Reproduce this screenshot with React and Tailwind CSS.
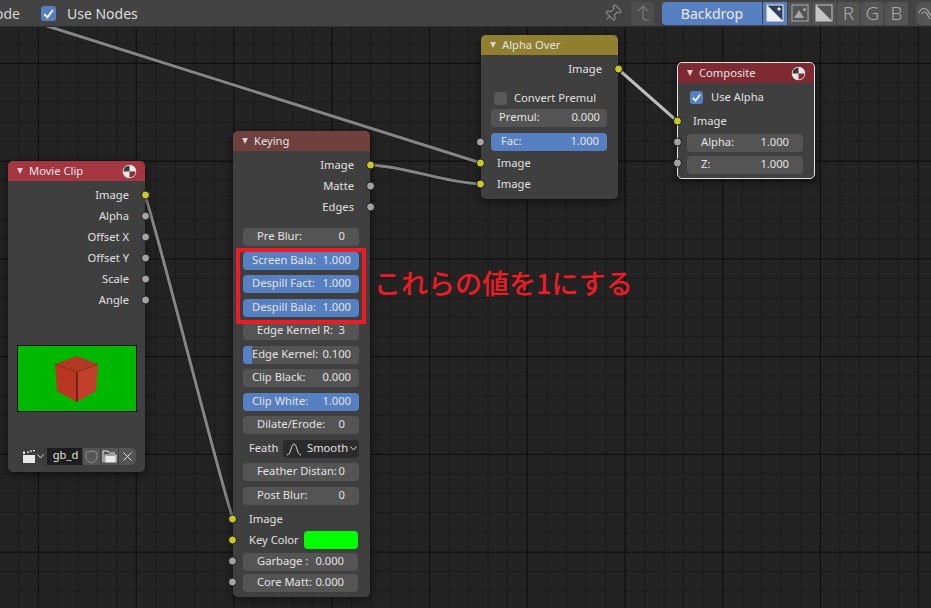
import React from "react";
import { Pin } from "lucide-react";

const font = { fontFamily: '"Noto Sans", sans-serif' };

function Socket({ y, yellow, left }) {
  return (
    <span
      className={`absolute w-[9px] h-[9px] rounded-full border border-[#1c1c1c] -translate-y-1/2 ${left ? "left-[-5px]" : "right-[-5px]"} ${yellow ? "bg-[#c9c82a]" : "bg-[#a3a3a3]"}`}
      style={{ top: y }}
    />
  );
}

function PieIcon() {
  return (
    <svg width="15" height="15" viewBox="0 0 16 16" className="shrink-0">
      <circle cx="8" cy="8" r="7.2" fill="#e8e8e8" />
      <path d="M8 8V1.6A6.4 6.4 0 0 0 1.6 8Z" fill="#3a3a3a" />
      <path d="M8 8V14.4A6.4 6.4 0 0 0 14.4 8Z" fill="#8a2a32" />
    </svg>
  );
}

function Header({ title, color, pie }) {
  return (
    <div className={`flex items-center h-[20px] pl-[9px] pr-[8px] rounded-t-[5px] ${color}`}>
      <span className="w-0 h-0 border-l-[3.5px] border-r-[3.5px] border-t-[6px] border-l-transparent border-r-transparent border-t-[#d4d4d4] mr-[6px]" />
      <span className="text-[#e2e2e2] text-[11.2px] flex-1">{title}</span>
      {pie && <PieIcon />}
    </div>
  );
}

function Out({ label }) {
  return <div className="h-[21px] flex items-center justify-end pr-[16px] text-[#e0e0e0] text-[11.2px]">{label}</div>;
}

function In({ label, cls = "pl-[16px]" }) {
  return <div className={`h-[21px] flex items-center text-[#e0e0e0] text-[11.2px] ${cls}`}>{label}</div>;
}

function Field({ label, value, blue, fill, cls = "pl-[14px] pr-[14px]", w = "w-[116px]" }) {
  return (
    <div className={`relative h-[18px] ${w} pb-[1px] rounded-[4px] overflow-hidden flex items-center justify-between text-[11.2px] text-[#e2e2e2] ${cls} ${blue ? "bg-[#5680c2]" : "bg-[#545454]"}`}>
      {fill && <span className="absolute left-0 top-0 bottom-0 w-[9px] bg-[#5680c2]" />}
      <span className="relative whitespace-nowrap">{label}</span>
      <span className="relative whitespace-nowrap">{value}</span>
    </div>
  );
}

function Check({ on }) {
  return (
    <span className={`w-[13px] h-[13px] rounded-[3px] flex items-center justify-center shrink-0 ${on ? "bg-[#5680c2]" : "bg-[#585858]"}`}>
      {on && (
        <svg width="11" height="11" viewBox="0 0 12 12">
          <path d="M2 6.5 5 9.5 10 2.8" stroke="#fff" strokeWidth="1.8" fill="none" />
        </svg>
      )}
    </span>
  );
}

function Links() {
  const Link = ({ d, light }) => (
    <>
      <path d={d} stroke="#141414" strokeWidth="4.5" fill="none" opacity="0.6" />
      <path d={d} stroke={light ? "#bdbdbd" : "#858585"} strokeWidth="3" fill="none" />
    </>
  );
  return (
    <svg className="absolute inset-0" width="931" height="608">
      <Link d="M28 20 L481 163" />
      <Link d="M370 165 C 410 167, 440 182, 481 184" />
      <Link d="M618 69 L677 121" light />
      <Link d="M145 195 C 160 240, 218 475, 233 519" />
    </svg>
  );
}

function MovieClip() {
  return (
    <div className="absolute left-[8px] top-[161px] w-[137px] h-[311px] rounded-[5px] bg-[#3f3f3f] shadow-[0_2px_10px_rgba(0,0,0,0.55)]">
      <Header title="Movie Clip" color="bg-[#a33641]" pie />
      <Socket y={34} yellow />
      <Socket y={55} />
      <Socket y={76} />
      <Socket y={97} />
      <Socket y={118} />
      <Socket y={139} />
      <div className="pt-[3.5px]">
        <Out label="Image" />
        <Out label="Alpha" />
        <Out label="Offset X" />
        <Out label="Offset Y" />
        <Out label="Scale" />
        <Out label="Angle" />
      </div>
      <div className="ml-[9px] mt-[34px] w-[120px] h-[67px] bg-[#00b800] border border-[#0c0c0c] flex items-center justify-center">
        <svg width="46" height="48" viewBox="0 0 46 48">
          <path d="M23 2 1 10 23 18 44 10Z" fill="#b03a24" />
          <path d="M1 10 3 37 23 48 23 18Z" fill="#ba3522" />
          <path d="M44 10 42 37 23 48 23 18Z" fill="#c2402a" />
          <path d="M23 18V48" stroke="#1a1010" strokeWidth="1" />
          <path d="M1 10 23 18 44 10" stroke="#7a2214" strokeWidth="0.7" fill="none" />
        </svg>
      </div>
      <div className="ml-[11px] mt-[36.5px] w-[117px] h-[17px] flex gap-[1px] rounded-[5px] overflow-hidden">
        <div className="w-[27px] bg-[#3c3c3c] flex items-center justify-center gap-[1px]">
          <svg width="14" height="13" viewBox="0 0 14 13">
            <path d="M1 5H13V13H1Z" fill="#e8e8e8" />
            <path d="M1 1.5h2V4H1zM5 1.5h2v1.2H5zM8 .5h2v1.2H8zM11 0h2v1.2h-2z" fill="#e8e8e8" />
          </svg>
          <svg width="7" height="5" viewBox="0 0 7 5"><path d="M.5.5 3.5 4 6.5.5" stroke="#ddd" fill="none" /></svg>
        </div>
        <div className="w-[35px] pb-[2px] pl-[2px] bg-[#1d1d1d] text-[#e2e2e2] text-[11.2px] flex items-center justify-center">gb_d</div>
        <div className="w-[17px] bg-[#555] flex items-center justify-center">
          <svg width="13" height="14" viewBox="0 0 13 14"><path d="M6.5 1 12 2.5V7C12 10 9 12 6.5 13 4 12 1 10 1 7V2.5Z" stroke="#8f8f8f" strokeWidth="1" fill="none" /></svg>
        </div>
        <div className="w-[17px] bg-[#555] flex items-center justify-center">
          <svg width="15" height="13" viewBox="0 0 15 13"><path d="M1 12V1H6L7.5 3H13M3 12V5H14V12Z" stroke="#e8e8e8" fill="none" /><path d="M3.5 6H13.5V12H3.5Z" fill="#e8e8e8" /></svg>
        </div>
        <div className="w-[17px] bg-[#555] flex items-center justify-center">
          <svg width="9" height="9" viewBox="0 0 9 9"><path d="M.5.5 8.5 8.5M8.5.5.5 8.5" stroke="#e0e0e0" /></svg>
        </div>
      </div>
    </div>
  );
}

function Keying() {
  return (
    <div className="absolute left-[233px] top-[131px] w-[137px] h-[466px] rounded-[5px] bg-[#3f3f3f] shadow-[0_2px_10px_rgba(0,0,0,0.55)]">
      <Header title="Keying" color="bg-[#70403f]" />
      <Socket y={34} yellow />
      <Socket y={55} />
      <Socket y={76} />
      <Socket y={388} yellow left />
      <Socket y={409} yellow left />
      <Socket y={430} left />
      <Socket y={451} left />
      <div className="pt-[3.5px]">
        <Out label="Image" />
        <Out label="Matte" />
        <Out label="Edges" />
      </div>
      <div className="mt-[10.5px] ml-[10px] flex flex-col gap-[5.5px]">
        <Field label="Pre Blur:" value="0" />
        <Field label="Screen Bala:" value="1.000" blue cls="pl-[9px] pr-[8px]" />
        <Field label="Despill Fact:" value="1.000" blue cls="pl-[9px] pr-[8px]" />
        <Field label="Despill Bala:" value="1.000" blue cls="pl-[9px] pr-[8px]" />
        <Field label="Edge Kernel R:" value="3" />
        <Field label="Edge Kernel:" value="0.100" fill cls="pl-[9px] pr-[8px]" />
        <Field label="Clip Black:" value="0.000" cls="pl-[9px] pr-[8px]" />
        <Field label="Clip White:" value="1.000" blue cls="pl-[9px] pr-[8px]" />
        <Field label="Dilate/Erode:" value="0" />
        <div className="h-[18px] flex items-center text-[11.2px] text-[#e0e0e0]">
          <span className="w-[40px] pl-[6px] pb-[1px]">Feath</span>
          <div className="w-[76px] h-[18px] rounded-[4px] bg-[#2b2b2b] flex items-center pl-[3px] pr-[2px]">
            <svg width="16" height="14" viewBox="0 0 16 14"><path d="M1 13C5 13 5 2 8 2S11 13 15 13" stroke="#ddd" fill="none" /></svg>
            <span className="ml-[5px] flex-1 pb-[1px]">Smooth</span>
            <svg width="7" height="5" viewBox="0 0 7 5"><path d="M.5.5 3.5 4 6.5.5" stroke="#ddd" fill="none" /></svg>
          </div>
        </div>
        <Field label="Feather Distan:" value="0" />
        <Field label="Post Blur:" value="0" />
      </div>
      <div className="mt-[4px]">
        <In label="Image" />
        <div className="h-[21px] flex items-center text-[#e0e0e0] text-[11.2px] pl-[16px]">
          <span className="flex-1">Key Color</span>
          <span className="w-[54px] h-[18px] rounded-[4px] bg-[#00ff00] mr-[12px]" />
        </div>
      </div>
      <div className="ml-[10px] mt-[2.5px] flex flex-col gap-[3px]">
        <Field label="Garbage :" value="0.000" w="w-[115px]" />
        <Field label="Core Matt:" value="0.000" w="w-[115px]" cls="pl-[14px] pr-[14px]" />
      </div>
    </div>
  );
}

function AlphaOver() {
  return (
    <div className="absolute left-[481px] top-[35px] w-[137px] h-[164px] rounded-[5px] bg-[#3f3f3f] shadow-[0_2px_10px_rgba(0,0,0,0.55)]">
      <Header title="Alpha Over" color="bg-[#8f7f2f]" />
      <Socket y={34} yellow />
      <Socket y={107} left />
      <Socket y={128} yellow left />
      <Socket y={149} yellow left />
      <div className="pt-[3.5px]">
        <Out label="Image" />
        <div className="h-[21px] mt-[8px] flex items-center pl-[13px] gap-[7px] text-[11.2px] text-[#e0e0e0]">
          <Check />
          <span>Convert Premul</span>
        </div>
      </div>
      <div className="ml-[10px] flex flex-col gap-[6.5px]">
        <Field label="Premul:" value="0.000" cls="pl-[8px] pr-[7px]" />
        <Field label="Fac:" value="1.000" blue cls="pl-[10px] pr-[8px]" />
      </div>
      <div className="mt-[2px]">
        <In label="Image" />
        <In label="Image" />
      </div>
    </div>
  );
}

function Composite() {
  return (
    <div className="absolute left-[677px] top-[62px] w-[138px] h-[117px] rounded-[5px] bg-[#3f3f3f] border border-[#e4e4e4] shadow-[0_2px_10px_rgba(0,0,0,0.55)]">
      <Header title="Composite" color="bg-[#7f2a33]" pie />
      <Socket y={58} yellow left />
      <Socket y={79} left />
      <Socket y={100} left />
      <div className="h-[21px] mt-[3.5px] flex items-center pl-[12px] gap-[8px] text-[11.2px] text-[#e0e0e0]">
        <Check on />
        <span>Use Alpha</span>
      </div>
      <div className="mt-[3.5px]">
        <In label="Image" cls="pl-[15px]" />
      </div>
      <div className="ml-[9px] mt-[2px] flex flex-col gap-[3.5px]">
        <Field label="Alpha:" value="1.000" cls="pl-[14px] pr-[14px]" />
        <Field label="Z:" value="1.000" cls="pl-[14px] pr-[14px]" />
      </div>
    </div>
  );
}

function TopBar() {
  const Chan = ({ children }) => (
    <div className="w-[23px] h-[23px] bg-[#545454] rounded-[3px] shrink-0 flex items-center justify-center text-[#a8a8a8] text-[19px] font-light">{children}</div>
  );
  return (
    <div className="relative z-10 h-[27px] bg-[#434343] border-b border-[#2e2e2e] flex items-center overflow-hidden">
      <div className="w-[20px] shrink-0 overflow-hidden flex justify-end">
        <span className="text-[14px] text-[#d4d4d4] whitespace-nowrap">ode</span>
      </div>
      <div className="ml-[21px] w-[15px] h-[15px] rounded-[3px] bg-[#5680c2] flex items-center justify-center">
        <svg width="13" height="13" viewBox="0 0 12 12"><path d="M2 6.5 5 9.5 10 2.8" stroke="#fff" strokeWidth="1.7" fill="none" /></svg>
      </div>
      <span className="ml-[11px] text-[14px] text-[#dedede]">Use Nodes</span>
      <div className="flex-1" />
      <Pin size={19} strokeWidth={1.4} color="#8f8f8f" className="rotate-45 shrink-0" />
      <div className="ml-[9px] w-[23px] h-[23px] bg-[#4d4d4d] rounded-[4px] shrink-0 flex items-center justify-center">
        <svg width="16" height="18" viewBox="0 0 16 18"><path d="M3 7 8 2 13 7M8 2V14C8 15 9 16 11 16H14" stroke="#7a7a7a" strokeWidth="1.2" fill="none" /></svg>
      </div>
      <div className="ml-[8px] w-[100px] h-[23px] bg-[#5680c2] rounded-l-[4px] shrink-0 flex items-center justify-center text-[14px] text-[#e8e8e8]">Backdrop</div>
      <div className="ml-[1px] w-[24px] h-[23px] bg-[#5680c2] shrink-0 flex items-center justify-center">
        <svg width="18" height="18" viewBox="0 0 18 18">
          <rect x="1" y="1" width="16" height="16" fill="#2c3f60" stroke="#f0f0f0" />
          <path d="M1 1 17 17H1Z" fill="#f0f0f0" />
          <path d="M13 3l2 2-2 2-2-2Z" fill="#f0f0f0" />
        </svg>
      </div>
      <div className="ml-[1px] w-[23px] h-[23px] bg-[#545454] shrink-0 flex items-center justify-center">
        <svg width="18" height="18" viewBox="0 0 18 18">
          <rect x="1" y="1" width="16" height="16" fill="none" stroke="#a8a8a8" />
          <path d="M3 14 8 6l5 8Z" fill="#a8a8a8" />
          <circle cx="13.5" cy="5.5" r="1.5" fill="#a8a8a8" />
        </svg>
      </div>
      <div className="ml-[1px] w-[24px] h-[23px] bg-[#545454] shrink-0 flex items-center justify-center">
        <svg width="18" height="18" viewBox="0 0 18 18">
          <rect x="1" y="1" width="16" height="16" fill="none" stroke="#c4c4c4" />
          <path d="M1 1 17 17H1Z" fill="#c4c4c4" />
        </svg>
      </div>
      <div className="ml-[1px] flex gap-[1px] shrink-0">
        <Chan>R</Chan>
        <Chan>G</Chan>
        <Chan>B</Chan>
      </div>
      <div className="ml-[8px] w-[15px] h-[23px] bg-[#545454] rounded-l-[6px] shrink-0 overflow-hidden flex items-center pl-[1px]">
        <svg width="18" height="16" viewBox="0 0 18 16" className="shrink-0"><path d="M2 8C4 2 10 2 12 8L15 12M5 9C6 6 9 6 10 9l3 5" stroke="#a8a8a8" strokeWidth="1.2" fill="none" /></svg>
      </div>
    </div>
  );
}

export default function App() {
  return (
    <div
      className="relative w-[931px] h-[608px] overflow-hidden bg-[#232323] select-none"
      style={font}
    >
      <div className="absolute inset-0 bg-[linear-gradient(to_right,#1a1a1a_1px,transparent_1px),linear-gradient(to_bottom,#1a1a1a_1px,transparent_1px)] bg-[length:19.55px_19.55px] bg-[position:18.5px_4px]" />
      <div className="absolute inset-0 bg-[linear-gradient(to_right,#0e0e0e_1px,transparent_1px),linear-gradient(to_bottom,#0e0e0e_1px,transparent_1px)] bg-[length:97.75px_97.75px] bg-[position:38px_63px]" />
      <Links />
      <MovieClip />
      <Keying />
      <AlphaOver />
      <Composite />
      <div className="absolute left-[236px] top-[248px] w-[130px] h-[76px] border-[4px] border-[#ed1c24]" />
      <div
        className="absolute left-[374px] top-[264px] text-[27px] leading-[38px] font-medium text-[#ed1c24] whitespace-nowrap"
        style={{ fontFamily: '"Noto Sans CJK JP", sans-serif' }}
      >
        これらの値を1にする
      </div>
      <TopBar />
    </div>
  );
}
